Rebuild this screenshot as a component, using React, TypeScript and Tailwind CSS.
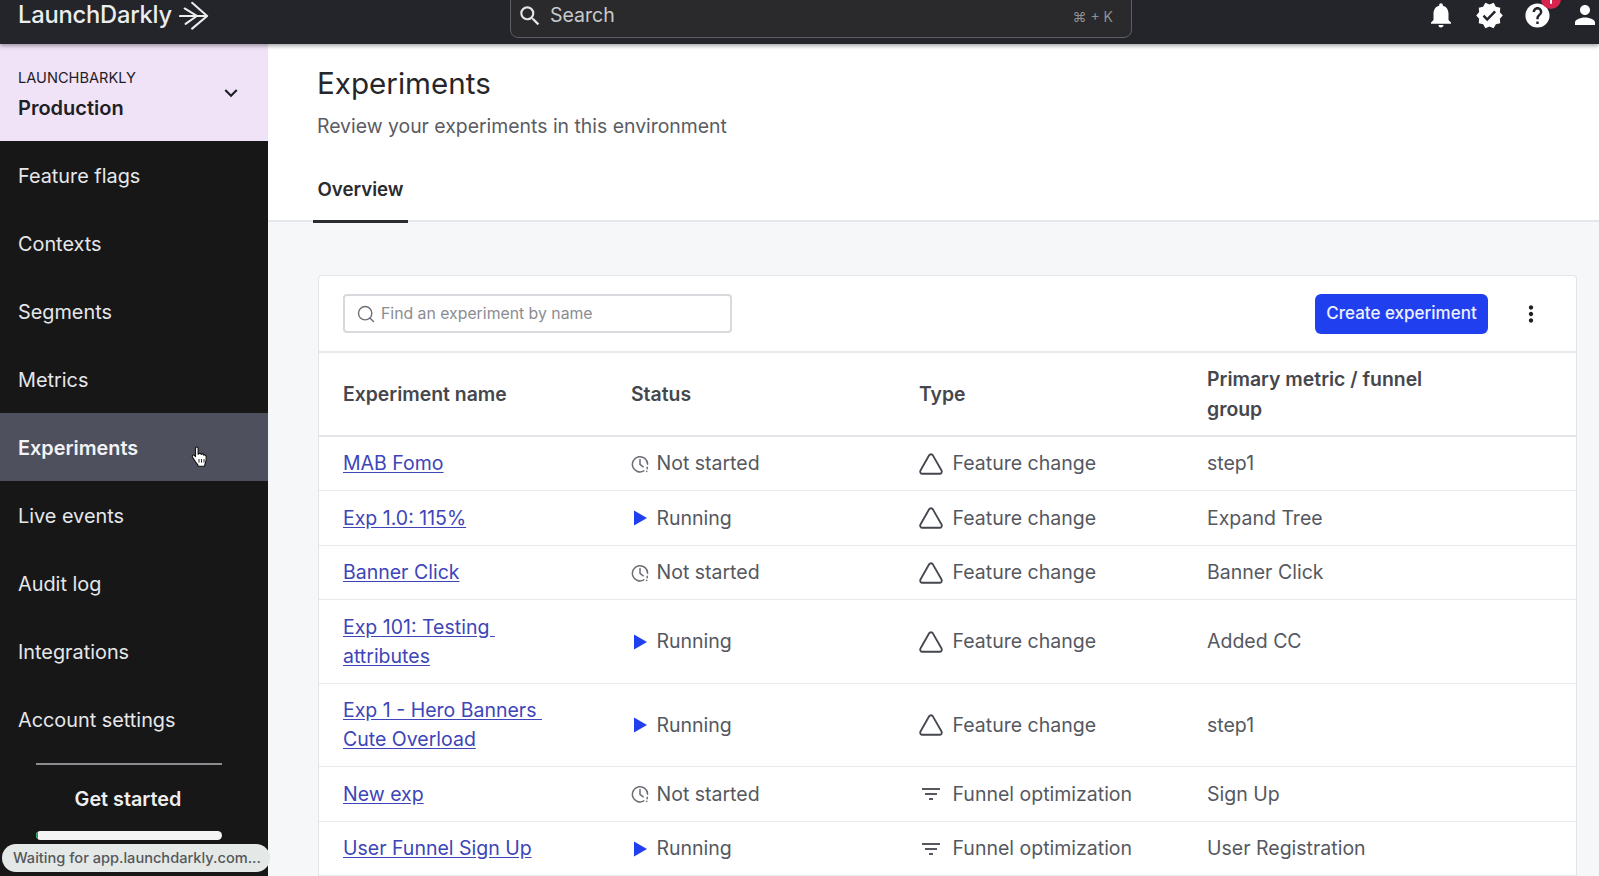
import React from 'react';
import { MdNotifications, MdVerified, MdHelp, MdPerson, MdSearch, MdMoreVert, MdFilterList, MdExpandMore } from 'react-icons/md';
import { Search, Triangle } from 'lucide-react';

const navItems = ['Feature flags', 'Contexts', 'Segments', 'Metrics', 'Experiments', 'Live events', 'Audit log', 'Integrations', 'Account settings'];

const rows = [
  { name: ['MAB Fomo'], status: 'Not started', type: 'Feature change', metric: 'step1' },
  { name: ['Exp 1.0: 115%'], status: 'Running', type: 'Feature change', metric: 'Expand Tree' },
  { name: ['Banner Click'], status: 'Not started', type: 'Feature change', metric: 'Banner Click' },
  { name: ['Exp 101: Testing\u00a0', 'attributes'], status: 'Running', type: 'Feature change', metric: 'Added CC' },
  { name: ['Exp 1 - Hero Banners\u00a0', 'Cute Overload'], status: 'Running', type: 'Feature change', metric: 'step1' },
  { name: ['New exp'], status: 'Not started', type: 'Funnel optimization', metric: 'Sign Up' },
  { name: ['User Funnel Sign Up'], status: 'Running', type: 'Funnel optimization', metric: 'User Registration' },
];

const LogoArrow = () => (
  <svg width="30" height="29" viewBox="0 0 32 30" fill="none" stroke="currentColor" strokeWidth="2.2" strokeLinejoin="round" strokeLinecap="round">
    <path d="M1 15.5h27" />
    <path d="M14 1.5 30 15.5 14 29" />
    <path d="M6 7.5 19 15.5 7 24" />
  </svg>
);

const NotStartedIcon = () => (
  <svg width="18" height="18" viewBox="0 0 18 18" fill="none" stroke="#6b6e75" strokeWidth="1.5" strokeLinecap="round">
    <path d="M12.8 15.9A7.6 7.6 0 1 1 16.6 9.2" />
    <path d="M9 4.4V9.4l3.2 2.4" />
    <path d="M16.2 12.2v1.6M15.7 16.2v.2" />
  </svg>
);

const PlayIcon = () => (
  <svg width="18" height="18" viewBox="0 0 18 18" fill="#2040f0">
    <path d="M3 1.5 16 9 3 16.5z" />
  </svg>
);

const HandCursor = () => (
  <svg width="18" height="22" viewBox="0 0 18 22" className="absolute left-[191px] top-[33px]">
    <path d="M4.5 2.2c0-1.6 2.6-1.6 2.6 0v6l.6-.2c.4-1 2-1 2.4 0l.2.4c.5-.8 2-.7 2.3.3l.2.5c.6-.6 2-.3 2.2.8.4 2.4.2 5-.6 7-.4 1-.7 2.2-.7 3.2H7.3c-.3-1.6-1.6-2.6-2.7-4.2L1.5 11c-.9-1.2.7-2.6 1.8-1.6l1.2 1.2z" fill="#fff" stroke="#111" strokeWidth="1.1" strokeLinejoin="round" />
    <path d="M8 13v3.6M10.5 13v3.6M13 13v3.6" stroke="#111" strokeWidth="0.9" />
  </svg>
);

const NavItem = ({ label }: { label: string }) => {
  const active = label === 'Experiments';
  return (
    <div className={`relative h-[68px] flex items-center pl-[18px] pt-[3px] text-[19.85px] ${active ? 'bg-[#4f505e] font-semibold text-[#f2f3f5]' : 'text-[#e6e7ea]'}`}>
      {label}
      {active && <HandCursor />}
    </div>
  );
};

const StatusCell = ({ status }: { status: string }) => (
  <div className="w-[288px] flex items-center gap-[7.5px] text-[#55585f]">
    <span className="flex w-[18px] justify-center">{status === 'Running' ? <PlayIcon /> : <NotStartedIcon />}</span>
    {status}
  </div>
);

const TypeCell = ({ type }: { type: string }) => (
  <div className="w-[288px] flex items-center gap-[9.5px] text-[#55585f]">
    <span className="flex w-[24px] justify-center">
      {type === 'Feature change' ? (
        <Triangle size={26} strokeWidth={1.7} color="#44474e" className="shrink-0" />
      ) : (
        <MdFilterList size={24} color="#55585f" />
      )}
    </span>
    {type}
  </div>
);

const HeaderIcon = ({ children }: { children: React.ReactNode }) => (
  <div className="relative flex h-[30px] w-[48px] items-center justify-center">{children}</div>
);

const App = () => {
  return (
    <div className="h-[876px] w-[1599px] overflow-hidden flex flex-col bg-white font-['Inter',sans-serif]">
      {/* top bar */}
      <header className="relative z-10 h-[44px] shrink-0 flex items-center justify-between bg-[#23252b] pb-[14px] shadow-[0_2px_4px_rgba(0,0,0,0.35)]">
        <div className="flex items-center gap-[7px] pl-[18px] text-[#eceded]">
          <span className="text-[23.7px] font-medium tracking-[-0.2px] leading-[30px]">LaunchDarkly</span>
          <LogoArrow />
        </div>
        <div className="absolute left-[510px] top-[-2px] h-[40px] w-[622px] flex items-center justify-between rounded-b-lg border border-[#5d5f65] bg-[#2a2a2c] pb-[4px] pl-[6px] pr-[18px]">
          <div className="flex items-center gap-[7px] text-[19.5px] text-[#c9cacc]">
            <MdSearch size={26} color="#e5e5e6" />
            Search
          </div>
          <span className="text-[14px] text-[#8f9094]">⌘ + K</span>
        </div>
        <div className="flex items-center mr-[-10px] text-white">
          <HeaderIcon><MdNotifications size={30} /></HeaderIcon>
          <HeaderIcon><MdVerified size={29} /></HeaderIcon>
          <HeaderIcon>
            <MdHelp size={29} />
            <span className="absolute left-[28px] top-[-11px] flex h-[20px] w-[20px] items-start justify-center rounded-full bg-[#d9244f]">
              <span className="mt-[10px] h-[5px] w-[2px] rounded-sm bg-white" />
            </span>
          </HeaderIcon>
          <HeaderIcon><MdPerson size={30} /></HeaderIcon>
        </div>
      </header>

      <div className="flex flex-1 min-h-0">
        {/* sidebar */}
        <aside className="relative w-[268px] shrink-0 bg-[#171718]">
          <div className="h-[97px] flex items-center justify-between bg-[#f0e3f8] pl-[18px] pr-[24px] text-[#1f2024]">
            <div className="pt-[3px]">
              <div className="text-[14.6px] leading-[20px] mb-[8px]">LAUNCHBARKLY</div>
              <div className="text-[20px] leading-[24px] font-semibold">Production</div>
            </div>
            <MdExpandMore size={26} />
          </div>
          <nav>
            {navItems.map((item) => (
              <NavItem key={item} label={item} />
            ))}
          </nav>
          <div className="ml-[36px] mr-[46px] mt-[10px] h-[2px] bg-[#8c8d90]" />
          <div className="ml-[34px] mr-[46px] mt-[22px] text-center text-[19.8px] font-semibold leading-[24px] text-[#eeeeef]">Get started</div>
          <div className="ml-[36px] mr-[46px] mt-[20px] h-[9px] rounded-full bg-[#f4f4f4] overflow-hidden">
            <div className="h-full w-[2px] bg-[#12a150]" />
          </div>
          <div className="absolute left-[2px] top-[800px] z-10 flex h-[28px] w-[268px] items-center whitespace-nowrap rounded-full bg-[#e4e8e6] pl-[11px] pt-[2px] text-[14.6px] font-medium text-[#55585c]">
            Waiting for app.launchdarkly.com...
          </div>
        </aside>

        {/* main */}
        <main className="flex-1 min-w-0 bg-[#f6f7f9]">
          <div className="h-[178px] bg-white border-b-2 border-[#e6e7ea] pl-[49px] pt-[19px]">
            <h1 className="text-[29.6px] leading-[40px] text-[#25262a]">Experiments</h1>
            <p className="mt-[8px] text-[19.4px] leading-[30px] text-[#5a5c62]">Review your experiments in this environment</p>
            <div className="mt-[20px] ml-[-4px] inline-flex h-[62px] w-[95px] items-center justify-center border-b-[3px] border-[#2b2c30] text-[18.7px] font-semibold text-[#2a2b2f]">
              Overview
            </div>
          </div>

          <section className="ml-[50px] mt-[53px] w-[1259px] rounded-t border border-b-0 border-[#e4e5e8] bg-white">
            <div className="h-[77px] flex items-center justify-between border-b-2 border-[#e8e9eb] pl-[24px] pr-[32px]">
              <div className="h-[39px] w-[389px] flex items-center gap-[5px] rounded border-2 border-[#d8d9dc] pl-[11px]">
                <Search size={20} color="#6d6f75" strokeWidth={1.7} />
                <span className="text-[15.8px] text-[#8a8c92]">Find an experiment by name</span>
              </div>
              <div className="flex items-center gap-[30px]">
                <button className="h-[40px] w-[173px] rounded-md bg-[#2040f0] text-[17px] font-medium text-[#eef0ff]">Create experiment</button>
                <MdMoreVert size={26} color="#1f2024" />
              </div>
            </div>
            <div className="h-[83.5px] flex items-center border-b-2 border-[#e4e5e8] pl-[24px] text-[19.4px] font-semibold leading-[30px] text-[#45474d]">
              <div className="w-[288px]">Experiment name</div>
              <div className="w-[288px]">Status</div>
              <div className="w-[288px]">Type</div>
              <div className="w-[288px]">Primary metric / funnel<br />group</div>
            </div>
            {rows.map((row) => (
              <div key={row.name[0]} className={`${row.name.length > 1 ? 'h-[83.5px]' : 'h-[54.5px]'} flex items-center border-b border-[#e8e9eb] pl-[24px] pt-[1px] text-[19.5px] leading-[29px]`}>
                <div className="w-[288px] text-[#3d45b8] underline underline-offset-2">
                  {row.name.map((line) => (
                    <div key={line}>{line}</div>
                  ))}
                </div>
                <StatusCell status={row.status} />
                <TypeCell type={row.type} />
                <div className="text-[#55585f]">{row.metric}</div>
              </div>
            ))}
          </section>
        </main>
      </div>
    </div>
  );
};

export default App;
